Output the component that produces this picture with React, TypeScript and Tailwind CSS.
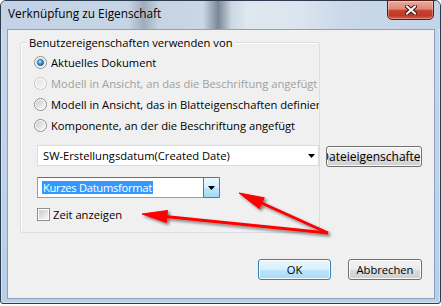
import React from "react";

type RadioState = "checked" | "unchecked" | "disabled";

interface RadioRowProps {
  state: RadioState;
  label: string;
}

function Caret() {
  return (
    <svg width="7" height="4" viewBox="0 0 7 4" className="shrink-0">
      <polygon points="0,0 7,0 3.5,4" fill="#000" />
    </svg>
  );
}

function Radio({ state }: { state: RadioState }) {
  const disabled = state === "disabled";
  return (
    <svg width="13" height="13" viewBox="0 0 13 13" className="shrink-0">
      <defs>
        <linearGradient id={`rf-${state}`} x1="0" y1="0" x2="1" y2="1">
          <stop offset="0" stopColor={disabled ? "#e4e4e4" : "#c9ccd1"} />
          <stop offset="1" stopColor={disabled ? "#f6f6f6" : "#fafafa"} />
        </linearGradient>
        <radialGradient id={`rd-${state}`} cx="0.4" cy="0.35" r="0.75">
          <stop offset="0" stopColor="#c4ecff" />
          <stop offset="0.45" stopColor="#3b9ddb" />
          <stop offset="1" stopColor="#0c4c88" />
        </radialGradient>
      </defs>
      <circle cx="6.5" cy="6.5" r="6" fill="#fff" stroke={disabled ? "#c4c4c4" : "#8b8d90"} />
      <circle cx="6.5" cy="6.5" r="4.6" fill={`url(#rf-${state})`} />
      {state === "checked" && (
        <circle cx="6.5" cy="6.5" r="3.1" fill={`url(#rd-${state})`} stroke="#1b4a78" strokeWidth="0.6" />
      )}
    </svg>
  );
}

function RadioRow({ state, label }: RadioRowProps) {
  return (
    <div className="ml-[13px] flex h-[21px] w-[285px] items-center gap-[4px]">
      <Radio state={state} />
      <span className={`flex-1 overflow-hidden whitespace-nowrap ${state === "disabled" ? "text-[#a0a0a0]" : ""}`}>
        {label}
      </span>
    </div>
  );
}

function WinButton({ label, isDefault, className }: { label: string; isDefault?: boolean; className: string }) {
  return (
    <div
      className={`flex h-[21px] items-center justify-center overflow-hidden whitespace-nowrap rounded-[3px] border shadow-[inset_0_0_0_1px_rgba(255,255,255,0.85)] ${
        isDefault
          ? "border-[#3c7fb1] bg-[linear-gradient(180deg,#eaf6fd_0%,#d9f0fc_50%,#bee6fd_50%,#a7d9f5_100%)]"
          : "border-[#707070] bg-[linear-gradient(180deg,#f2f2f2_0%,#ebebeb_50%,#dddddd_50%,#cfcfcf_100%)]"
      } ${className}`}
    >
      {label}
    </div>
  );
}

export default function App() {
  return (
    <div className="relative h-[306px] w-[441px] overflow-hidden bg-white font-['Open_Sans',sans-serif] text-[11.2px] leading-[15px] text-black">
      {/* Window frame */}
      <div className="flex h-[304px] w-[441px] flex-col rounded-t-[6px] rounded-b-[3px] border border-[#2b3b50] bg-[linear-gradient(180deg,#c6d7ea_0%,#b9cfe7_100%)] shadow-[inset_0_0_0_1px_rgba(255,255,255,0.4)]">
        {/* Title bar */}
        <div className="flex h-[28px] items-start rounded-t-[5px] bg-[linear-gradient(90deg,#c3d3e5_0%,#c6d5e6_29%,#9eacbb_32.5%,#c5d3e2_36%,#cad7e5_46%,#7a8795_49.5%,#cbd7e3_52.5%,#dfe7f0_56%,#dce5ef_68%,#cad8e8_78%,#c2d4e8_100%)]">
          <span className="pt-[5px] pl-[7px] text-[11.8px]">Verknüpfung zu Eigenschaft</span>
          <div className="-mt-px mr-[6px] ml-auto flex h-[20px] w-[47px] items-center justify-center rounded-b-[5px] border border-[#5a1d15] bg-[linear-gradient(180deg,#eaaa9e_0%,#dc8878_45%,#c9432f_52%,#c13826_80%,#d3624b_100%)] shadow-[inset_0_0_0_1px_rgba(255,255,255,0.3)]">
            <svg width="12" height="10" viewBox="0 0 12 10">
              <path d="M2 1.5 L10 8.5 M10 1.5 L2 8.5" stroke="#3b1510" strokeWidth="4" strokeLinecap="square" />
              <path d="M2 1.5 L10 8.5 M10 1.5 L2 8.5" stroke="#fff" strokeWidth="2" strokeLinecap="square" />
            </svg>
          </div>
        </div>

        {/* Client area */}
        <div className="ml-[6px] mr-[5px] flex h-[270px] flex-col border border-[#8aa2c0] bg-[#f0f0f0] pt-[12px] pr-[12px] pl-[12px]">
          <div className="flex items-start">
            {/* Group box */}
            <div className="relative flex h-[191px] w-[304px] flex-col rounded-[3px] border border-[#d5dfe5] pt-[9px] shadow-[inset_1px_1px_0_#fff]">
              <span className="absolute top-[-8px] left-[6px] bg-[#f0f0f0] px-[2px]">Benutzereigenschaften verwenden von</span>

              <RadioRow state="checked" label="Aktuelles Dokument" />
              <RadioRow state="disabled" label="Modell in Ansicht, an das die Beschriftung angefügt" />
              <RadioRow state="unchecked" label="Modell in Ansicht, das in Blatteigenschaften definiert ist" />
              <RadioRow state="unchecked" label="Komponente, an der die Beschriftung angefügt" />

              <div className="mt-[9px] ml-[16px] flex h-[21px] w-[282px] items-center border border-[#d9dce2] bg-white pr-[3px] pl-[5px]">
                <span className="flex-1 whitespace-nowrap">SW-Erstellungsdatum(Created Date)</span>
                <Caret />
              </div>

              <div className="mt-[11px] ml-[16px] flex h-[21px] w-[183px] border border-[#7da2ce] border-t-[#3d7bad] bg-white">
                <div className="flex flex-1 items-center pl-[4px]">
                  <span className="bg-[#3399ff] px-px leading-[13px] tracking-[-0.3px] text-white">Kurzes Datumsformat</span>
                </div>
                <div className="-my-px -mr-px flex w-[17px] items-center justify-center rounded-[1px] border border-[#3c7fb1] bg-[linear-gradient(180deg,#eaf6fd_0%,#d9f0fc_50%,#bee6fd_50%,#a7d9f5_100%)]">
                  <Caret />
                </div>
              </div>

              <div className="mt-[10px] ml-[16px] flex h-[13px] items-center gap-[3px]">
                <span className="h-[13px] w-[13px] shrink-0 border border-[#8e8f8f] bg-white p-px">
                  <span className="block h-full w-full bg-[linear-gradient(135deg,#c8ccd2_0%,#f7f7f7_100%)]" />
                </span>
                <span>Zeit anzeigen</span>
              </div>
            </div>

            <WinButton label="Dateieigenschaften" className="mt-[104px] ml-[6px] w-[97px] text-[12px]" />
          </div>

          {/* Dialog buttons */}
          <div className="mt-[26px] flex justify-end gap-[17px]">
            <WinButton label="OK" isDefault className="w-[73px]" />
            <WinButton label="Abbrechen" className="w-[74px]" />
          </div>
        </div>
      </div>

      {/* Red annotation arrows */}
      <svg className="pointer-events-none absolute inset-0" width="441" height="306" viewBox="0 0 441 306">
        <defs>
          <filter id="arrow-shadow" x="-20%" y="-50%" width="140%" height="200%">
            <feDropShadow dx="2" dy="2" stdDeviation="1.5" floodColor="#000" floodOpacity="0.5" />
          </filter>
        </defs>
        <g filter="url(#arrow-shadow)" fill="#ff0000" stroke="#ff0000" strokeLinejoin="round">
          <line x1="328" y1="233" x2="160" y2="216" strokeWidth="3" />
          <polygon points="142,214 167.5,210.5 166.3,222.5" strokeWidth="1" />
          <line x1="328" y1="233" x2="255" y2="200" strokeWidth="3" />
          <polygon points="239,193 264.3,197.8 259.3,208.7" strokeWidth="1" />
        </g>
      </svg>
    </div>
  );
}
